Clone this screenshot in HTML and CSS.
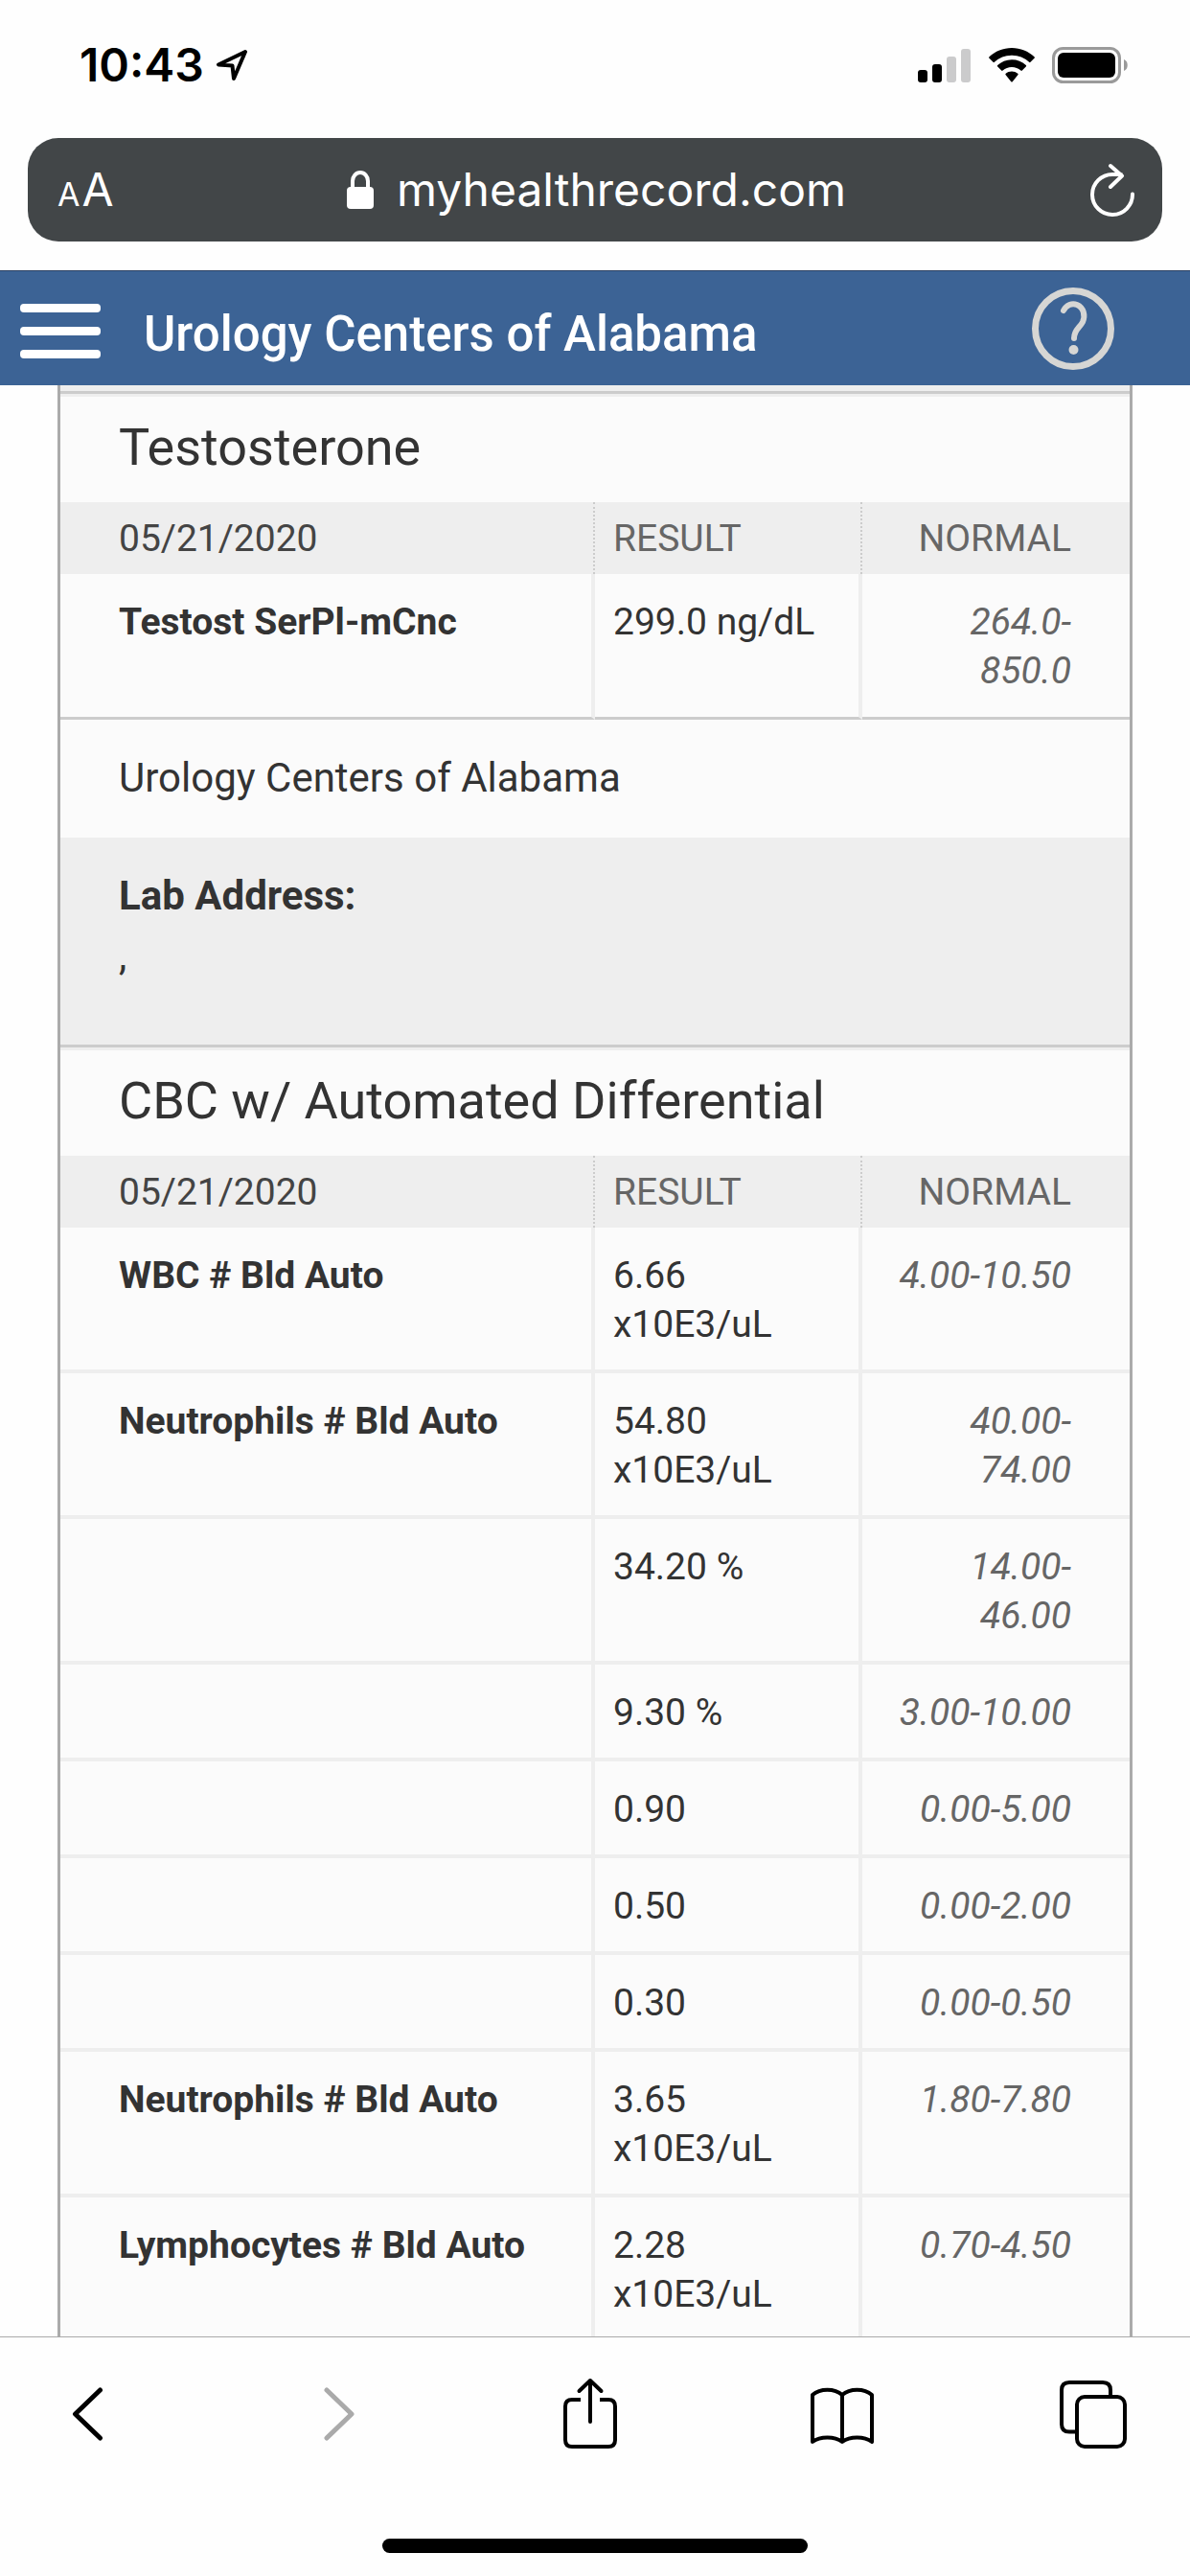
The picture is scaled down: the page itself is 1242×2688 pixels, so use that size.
FILE: index.html
```html
<!DOCTYPE html>
<html lang="en">
<head>
<meta charset="utf-8">
<meta name="viewport" content="width=device-width, initial-scale=1">
<title>Urology Centers of Alabama</title>
<link rel="stylesheet" href="styles.css">
</head>
<body>
<div class="status">
  <div class="status-left">
    <span class="time">10:43</span>
    <svg class="location" width="34" height="34" viewBox="0 0 34 34" fill="none" stroke="#000" stroke-width="4" stroke-linejoin="round"><path d="M31 3 3 16.500 17.500 17.500 19 31Z"/></svg>
  </div>
  <div class="status-right">
    <svg width="56" height="36" viewBox="0 0 56 36"><rect y="23" width="10" height="13" rx="3"/><rect x="15" y="17" width="10" height="19" rx="3"/><g fill="#cbcbcc"><rect x="30" y="9" width="10" height="27" rx="3"/><rect x="45" y="1" width="10" height="35" rx="3"/></g></svg>
    <svg width="48" height="36" viewBox="0 0 48 36"><path d="M24 0C14.900 0 6.600 3.500.5 9.300a1 1 0 0 0 0 1.500l4 4a1 1 0 0 0 1.400 0A26 26 0 0 1 24 7.700a26 26 0 0 1 18.100 7.100 1 1 0 0 0 1.400 0l4-4a1 1 0 0 0 0-1.500C41.400 3.500 33.100 0 24 0Z"/><path d="M24 12.300c-5.700 0-10.900 2.200-14.800 5.800a1 1 0 0 0 0 1.500l4 4a1 1 0 0 0 1.400 0 13.900 13.900 0 0 1 18.800 0 1 1 0 0 0 1.400 0l4-4a1 1 0 0 0 0-1.500A21.800 21.800 0 0 0 24 12.300Z"/><path d="M24 24.500c-2.400 0-4.600.9-6.300 2.300a1 1 0 0 0 0 1.500l5.600 6.900a1 1 0 0 0 1.400 0l5.600-6.900a1 1 0 0 0 0-1.500A9.800 9.800 0 0 0 24 24.500Z"/></svg>
    <svg width="80" height="38" viewBox="0 0 80 38"><rect x="1.500" y="1.500" width="69" height="35" rx="10" fill="none" stroke="#9a9a9a" stroke-width="3"/><rect x="6" y="6" width="60" height="26" rx="6"/><path d="M75 13c5 1.500 5 10.500 0 12Z" fill="#9a9a9a"/></svg>
  </div>
</div>
<div class="address-bar">
  <button class="text-size" aria-label="Text size"><span class="small-a">A</span><span>A</span></button>
  <a class="site" href="#"><svg width="28" height="40" viewBox="0 0 28 40" fill="#fff"><rect y="17" width="28" height="23" rx="4"/><path d="M6 19v-8a8 9 0 0 1 16 0v8" fill="none" stroke="#fff" stroke-width="4"/></svg><span>myhealthrecord.com</span></a>
  <button class="reload" aria-label="Reload"><svg width="48" height="56" viewBox="0 0 48 56" fill="none" stroke="#fff" stroke-width="4" stroke-linecap="round" stroke-linejoin="round"><path d="M45 32.500A21 21 0 1 1 24 12h9M22 3 34 13.500 22 25"/></svg></button>
</div>
<header class="app-bar">
  <button class="menu" aria-label="Menu"><svg width="84" height="57" viewBox="0 0 84 57" fill="#fff"><rect width="84" height="9" rx="4"/><rect y="24" width="84" height="9" rx="4"/><rect y="48" width="84" height="9" rx="4"/></svg></button>
  <h1>Urology Centers of Alabama</h1>
  <button class="help" aria-label="Help"><svg width="88" height="88" viewBox="0 0 88 88" fill="none" stroke="#d6d6d4" stroke-width="7"><circle cx="44" cy="44" r="39.500"/><path d="M34 25c3-6 9-8 14-6 7 3 9 11 6 18-3 6-9 8-9 17" stroke-width="6" stroke-linecap="round"/><circle cx="44.500" cy="66" r="5" fill="#d6d6d4" stroke="none"/></svg></button>
</header>
<main class="content">
  <div class="report">
    <section class="panel">
      <h2>Testosterone</h2>
      <table>
        <thead><tr><th>05/21/2020</th><th>RESULT</th><th>NORMAL</th></tr></thead>
        <tbody class="closed">
          <tr><td>Testost SerPl-mCnc</td><td>299.0 ng/dL</td><td>264.0-<wbr>850.0</td></tr>
        </tbody>
      </table>
      <p class="lab-name">Urology Centers of Alabama</p>
      <div class="lab-address"><strong>Lab Address:</strong><p>,</p></div>
    </section>
    <section class="panel">
      <h2>CBC w/ Automated Differential</h2>
      <table>
        <thead><tr><th>05/21/2020</th><th>RESULT</th><th>NORMAL</th></tr></thead>
        <tbody>
          <tr><td>WBC # Bld Auto</td><td>6.66 x10E3/uL</td><td>4.00-10.50</td></tr>
          <tr><td>Neutrophils # Bld Auto</td><td>54.80 x10E3/uL</td><td>40.00-<wbr>74.00</td></tr>
          <tr><td></td><td>34.20 %</td><td>14.00-<wbr>46.00</td></tr>
          <tr><td></td><td>9.30 %</td><td>3.00-10.00</td></tr>
          <tr><td></td><td>0.90</td><td>0.00-5.00</td></tr>
          <tr><td></td><td>0.50</td><td>0.00-2.00</td></tr>
          <tr><td></td><td>0.30</td><td>0.00-0.50</td></tr>
          <tr><td>Neutrophils # Bld Auto</td><td>3.65 x10E3/uL</td><td>1.80-7.80</td></tr>
          <tr><td>Lymphocytes # Bld Auto</td><td>2.28 x10E3/uL</td><td>0.70-4.50</td></tr>
        </tbody>
      </table>
    </section>
  </div>
</main>
<footer class="toolbar">
  <nav class="tools">
    <button aria-label="Back"><svg width="72" height="74" viewBox="0 0 72 74" stroke-width="5"><path d="M49.500 13 23.500 38 49.500 63"/></svg></button>
    <button aria-label="Forward" disabled><svg width="72" height="74" viewBox="0 0 72 74" stroke-width="5"><path d="M23 13 49 38 23 63"/></svg></button>
    <button aria-label="Share"><svg width="72" height="74" viewBox="0 0 72 74" stroke-width="4"><path d="M26 23h-9q-7 0-7 7v35q0 7 7 7h38q7 0 7-7V30q0-7-7-7h-9" stroke-linecap="butt"/><path d="M36 46V3M24.500 14 36 3 47.500 14"/></svg></button>
    <button aria-label="Bookmarks"><svg width="72" height="74" viewBox="0 0 72 74" stroke-width="4"><path d="M36 18C28 11 13 11 5 18V67C13 61 28 61 36 67 44 61 59 61 67 67V18C59 11 44 11 36 18V67"/></svg></button>
    <button aria-label="Tabs"><svg width="72" height="74" viewBox="0 0 72 74" stroke-width="4"><path d="M17 56.500h-6q-8 0-8-8V13q0-8 8-8h35q8 0 8 8v7"/><rect x="19" y="20" width="50" height="52" rx="8"/></svg></button>
  </nav>
  <div class="home-indicator"></div>
</footer>
</body>
</html>
```
FILE: styles.css
```css
* { box-sizing: border-box; }

body {
  margin: 0;
  height: 100vh;
  display: flex;
  flex-direction: column;
  background: #fefefe;
  color: #333;
  font-family: Roboto, "Liberation Sans", sans-serif;
}

h1, h2, p { margin: 0; font-weight: 400; }
button { padding: 0; border: 0; background: none; color: inherit; font: inherit; }
svg { display: block; flex: none; }

/* Phone status bar */
.status {
  display: flex;
  justify-content: space-between;
  align-items: center;
  padding: 38px 64px 46px 83px;
  color: #000;
}
.status-left { display: flex; align-items: center; gap: 12px; }
.time { font: 600 48px/60px Inter, sans-serif; }
.status-right { display: flex; align-items: center; gap: 18px; }

/* Browser address bar */
.address-bar {
  display: grid;
  grid-template-columns: 1fr auto 1fr;
  align-items: center;
  height: 108px;
  margin: 0 29px 30px;
  padding: 0 28px 0 31px;
  border-radius: 32px;
  background: #424648;
  color: #fff;
  font: 400 48px/60px Inter, sans-serif;
}
.text-size { justify-self: start; display: flex; align-items: baseline; gap: 2px; padding-top: 4px; }
.small-a { font-size: 34px; }
.site { display: flex; align-items: center; gap: 24px; color: inherit; text-decoration: none; }
.reload { justify-self: end; }

/* Site header */
.app-bar {
  display: flex;
  align-items: center;
  height: 120px;
  padding: 0 78px 0 21px;
  border-top: 1px solid #2c4263;
  background: #3c6395;
  color: #fff;
}
.menu { padding-top: 6px; }
.app-bar h1 { flex: 1; margin-left: 45px; padding-top: 12px; font-size: 51px; line-height: 60px; font-weight: 500; }

/* Lab report */
.content { flex: 1; min-height: 0; overflow-y: auto; scrollbar-width: none; }
.report {
  margin: 0 60px;
  padding-top: 6px;
  border: solid #ababab;
  border-width: 0 3px;
  background: #eee;
}
.panel { border-top: 3px solid #ccc; padding-top: 3px; }
.panel h2 { padding: 21px 61px 25px; background: #fbfbfb; font-size: 54px; line-height: 64px; }

table { width: 100%; table-layout: fixed; border-collapse: separate; border-spacing: 0; }
th, td { vertical-align: top; text-align: left; }
th { padding: 15px 19px 13px; color: #666; font-size: 39px; line-height: 47px; font-weight: 400; }
th:first-child { width: 50%; color: #444; }
th:nth-child(2) { width: 25%; }
th:not(:last-child) { border-right: 2px dotted #ccc; }
td {
  height: 101px;
  padding: 25px 19px 21px;
  border-bottom: 4px solid #eee;
  background: #fbfbfb;
  font-size: 39px;
  line-height: 51px;
}
td:not(:last-child) { border-right: 4px solid #eee; }
th:first-child, td:first-child { padding-left: 61px; }
td:first-child { font-weight: 700; }
th:last-child, td:last-child { padding-left: 24px; padding-right: 61px; text-align: right; }
td:last-child { color: #666; font-style: italic; }
.closed td { padding-bottom: 22px; border-bottom: 3px solid #ccc; }

.lab-name { padding: 36px 61px 37px; background: #fbfbfb; font-size: 42px; line-height: 50px; }
.lab-address { padding: 36px 61px 67px; font-size: 42px; line-height: 50px; }
.lab-address p { padding-top: 13px; }

/* Browser toolbar */
.toolbar { height: 250px; padding-top: 42px; border-top: 1px solid #aaa; background: #fefefe; }
.tools { display: flex; justify-content: space-between; padding: 0 51px 0 41px; }
.tools button { width: 100px; display: flex; justify-content: center; color: #000; }
.tools button:disabled { color: #aaa; }
.tools svg { fill: none; stroke: currentColor; stroke-linecap: round; stroke-linejoin: round; }
.home-indicator { width: 444px; height: 15px; margin: 94px auto 0; border-radius: 8px; background: #000; }
```
